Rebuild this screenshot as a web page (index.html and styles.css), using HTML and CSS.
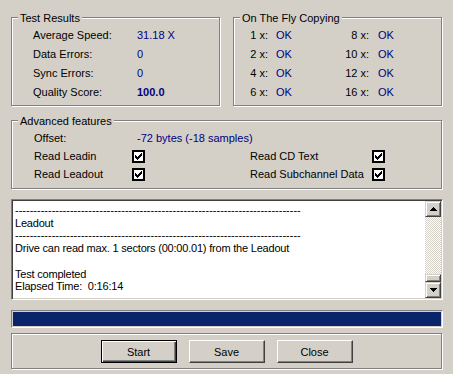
FILE: index.html
```html
<!DOCTYPE html>
<html lang="en">
<head>
  <meta charset="UTF-8">
  <title>Test Results</title>
  <link rel="stylesheet" href="styles.css">
</head>
<body>
  <div class="dialog">
    <div class="top-row">
      <div class="group results">
        <span class="legend">Test Results</span>
        <div class="stats">
          <span>Average Speed:</span><span class="val">31.18 X</span>
          <span>Data Errors:</span><span class="val">0</span>
          <span>Sync Errors:</span><span class="val">0</span>
          <span>Quality Score:</span><span class="val bold">100.0</span>
        </div>
      </div>
      <div class="group fly">
        <span class="legend">On The Fly Copying</span>
        <div class="speeds">
          <span class="n">1 x:</span><span class="val ok">OK</span><span class="n">8 x:</span><span class="val ok2">OK</span>
          <span class="n">2 x:</span><span class="val ok">OK</span><span class="n">10 x:</span><span class="val ok2">OK</span>
          <span class="n">4 x:</span><span class="val ok">OK</span><span class="n">12 x:</span><span class="val ok2">OK</span>
          <span class="n">6 x:</span><span class="val ok">OK</span><span class="n">16 x:</span><span class="val ok2">OK</span>
        </div>
      </div>
    </div>

    <div class="group advanced">
      <span class="legend">Advanced features</span>
      <div class="features">
        <span>Offset:</span><span class="val offset">-72 bytes (-18 samples)</span>
        <span>Read Leadin</span>
        <span class="check"><svg width="7" height="7" viewBox="0 0 7 7"><path d="M0 2h1v3h-1zM1 3h1v3h-1zM2 4h1v3h-1zM3 3h1v3h-1zM4 2h1v3h-1zM5 1h1v3h-1zM6 0h1v3h-1z"/></svg></span>
        <span>Read CD Text</span>
        <span class="check"><svg width="7" height="7" viewBox="0 0 7 7"><path d="M0 2h1v3h-1zM1 3h1v3h-1zM2 4h1v3h-1zM3 3h1v3h-1zM4 2h1v3h-1zM5 1h1v3h-1zM6 0h1v3h-1z"/></svg></span>
        <span>Read Leadout</span>
        <span class="check"><svg width="7" height="7" viewBox="0 0 7 7"><path d="M0 2h1v3h-1zM1 3h1v3h-1zM2 4h1v3h-1zM3 3h1v3h-1zM4 2h1v3h-1zM5 1h1v3h-1zM6 0h1v3h-1z"/></svg></span>
        <span>Read Subchannel Data</span>
        <span class="check"><svg width="7" height="7" viewBox="0 0 7 7"><path d="M0 2h1v3h-1zM1 3h1v3h-1zM2 4h1v3h-1zM3 3h1v3h-1zM4 2h1v3h-1zM5 1h1v3h-1zM6 0h1v3h-1z"/></svg></span>
      </div>
    </div>

    <div class="log">
      <div class="log-text">
        <div>------------------------------------------------------------------------------</div>
        <div class="msg">Leadout</div>
        <div>------------------------------------------------------------------------------</div>
        <div class="msg">Drive can read max. 1 sectors (00:00.01) from the Leadout</div>
        <div>&nbsp;</div>
        <div class="msg">Test completed</div>
        <div class="msg">Elapsed Time:&nbsp; 0:16:14</div>
      </div>
      <div class="scrollbar">
        <div class="sb-btn"><svg width="7" height="4" viewBox="0 0 7 4"><path d="M3 0h1v1h1v1h1v1h1v1h-7v-1h1v-1h1v-1h1z"/></svg></div>
        <div class="sb-track"></div>
        <div class="sb-thumb"></div>
        <div class="sb-btn"><svg width="7" height="4" viewBox="0 0 7 4"><path d="M0 0h7v1h-1v1h-1v1h-1v1h-1v-1h-1v-1h-1v-1h-1z"/></svg></div>
      </div>
    </div>

    <div class="progress"><div class="progress-fill" style="width: 100%"></div></div>

    <div class="group buttons">
      <button class="btn default">Start</button>
      <button class="btn">Save</button>
      <button class="btn">Close</button>
    </div>
  </div>
</body>
</html>
```

FILE: styles.css
```css
body {
  margin: 0;
  background-color: #d4d0c8;
  font-family: "Liberation Sans", Arial, sans-serif;
  font-size: 11px;
  color: #000;
  width: 453px;
  height: 374px;
  overflow: hidden;
}

.dialog {
  padding-left: 11px;
  width: 432px;
}

/* etched group boxes */
.group {
  position: relative;
  box-sizing: border-box;
  border: 1px solid #808080;
  box-shadow: inset 1px 1px 0 #fff, 1px 1px 0 #fff;
}

.legend {
  position: absolute;
  top: -6px;
  left: 6px;
  padding: 0 2px;
  line-height: 13px;
  background-color: #d4d0c8;
}

.val {
  color: #000080;
}

.bold {
  font-weight: bold;
}

.top-row {
  display: flex;
  gap: 13px;
  margin-top: 17px;
}

.results, .fly {
  width: 209px;
  height: 89px;
}

.stats {
  display: grid;
  grid-template-columns: 104px auto;
  grid-auto-rows: 19px;
  line-height: 19px;
  padding: 8px 0 0 21px;
}

.speeds {
  display: grid;
  grid-template-columns: 34px 63px 38px auto;
  grid-auto-rows: 19px;
  line-height: 19px;
  padding-top: 8px;
}

.speeds .n {
  text-align: right;
}

.speeds .ok {
  padding-left: 8px;
}

.speeds .ok2 {
  padding-left: 9px;
}

.advanced {
  width: 431px;
  height: 69px;
  margin-top: 14px;
}

.features {
  display: grid;
  grid-template-columns: 98px 118px 122px auto;
  grid-template-rows: 19px 18px 18px;
  line-height: 18px;
  align-items: center;
  padding: 7px 0 0 22px;
}

.features .offset {
  grid-column: 2 / 5;
  padding-left: 5px;
}

.check {
  display: flex;
  align-items: center;
  justify-content: center;
  box-sizing: border-box;
  width: 13px;
  height: 13px;
  border: 2px solid #000;
  background-color: #fff;
}

.check svg, .sb-btn svg {
  shape-rendering: crispEdges;
  fill: #000;
}

/* log box with scrollbar */
.log {
  display: flex;
  box-sizing: border-box;
  width: 432px;
  height: 101px;
  margin-top: 10px;
  padding: 1px;
  border: 1px solid;
  border-color: #808080 #fff #fff #808080;
  box-shadow: inset 1px 1px 0 #404040, inset -1px -1px 0 #d4d0c8;
  background-color: #fff;
}

.log-text {
  flex: 1;
  overflow: hidden;
  padding: 3px 0 0 2px;
  line-height: 12.7px;
  white-space: nowrap;
}

.log-text .msg {
  letter-spacing: -0.2px;
}

.scrollbar {
  display: flex;
  flex-direction: column;
  width: 16px;
}

.sb-btn, .sb-thumb {
  box-sizing: border-box;
  background-color: #d4d0c8;
  border: 1px solid;
  border-color: #d4d0c8 #404040 #404040 #d4d0c8;
  box-shadow: inset 1px 1px 0 #fff, inset -1px -1px 0 #808080;
}

.sb-btn {
  display: flex;
  align-items: center;
  justify-content: center;
  height: 16px;
}

.sb-thumb {
  height: 8px;
}

.sb-track {
  flex: 1;
  background: conic-gradient(#fff 25%, #d4d0c8 0 50%, #fff 0 75%, #d4d0c8 0) 0 0 / 2px 2px;
}

.progress {
  box-sizing: border-box;
  width: 432px;
  height: 18px;
  margin-top: 10px;
  padding: 1px;
  border: 1px solid;
  border-color: #808080 #fff #fff #808080;
}

.progress-fill {
  height: 100%;
  background-color: #0a246a;
}

.buttons {
  display: flex;
  justify-content: center;
  align-items: flex-start;
  gap: 12px;
  width: 431px;
  height: 36px;
  margin-top: 5px;
  padding-top: 6px;
}

.btn {
  box-sizing: border-box;
  width: 76px;
  height: 23px;
  padding: 0;
  font-family: inherit;
  font-size: 11px;
  color: #000;
  background-color: #d4d0c8;
  border: 1px solid;
  border-color: #fff #404040 #404040 #fff;
  box-shadow: inset -1px -1px 0 #808080;
}

.btn.default {
  border-color: #000;
  box-shadow: inset 1px 1px 0 #fff, inset -1px -1px 0 #404040, inset -2px -2px 0 #808080;
}
```
